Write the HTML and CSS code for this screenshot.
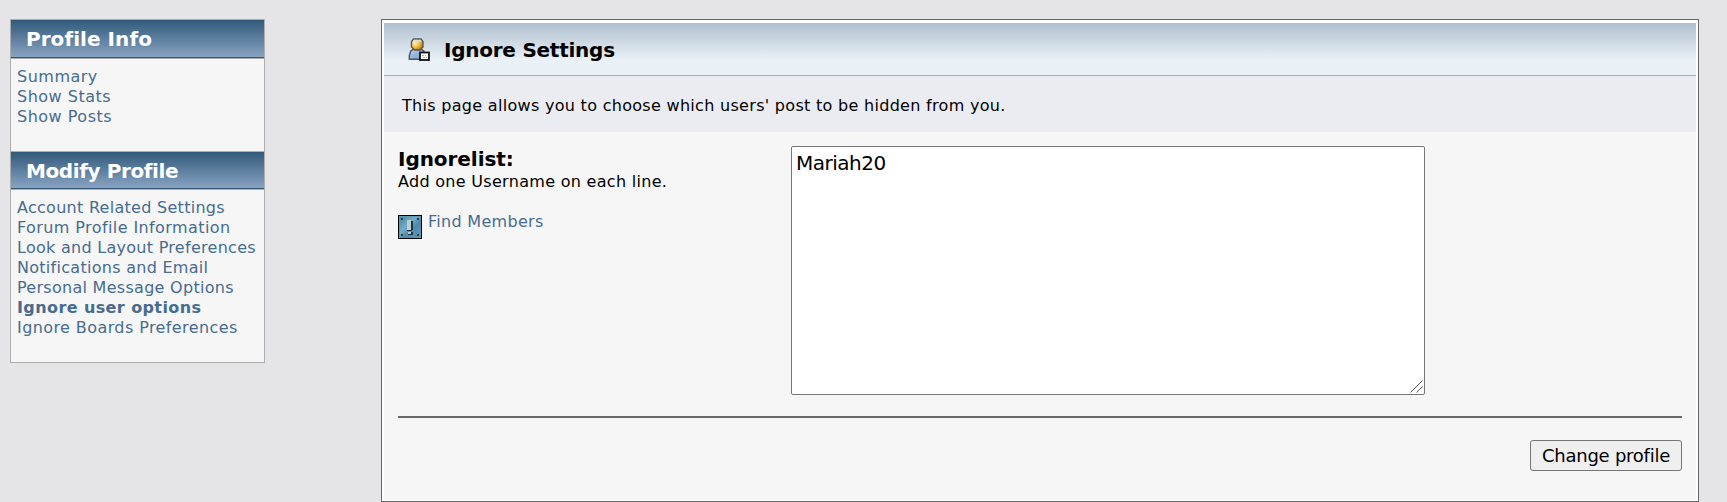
FILE: index.html
```html
<!DOCTYPE html>
<html>

<head>
	<meta charset="utf-8">
	<title>Ignore Settings</title>
	<link rel="stylesheet" href="styles.css">
</head>

<body>
	<div class="profile">
		<div class="sidebar">
			<h3 class="catbg">Profile Info</h3>
			<div class="links first">
				<a href="#">Summary</a><br>
				<a href="#">Show Stats</a><br>
				<a href="#">Show Posts</a>
			</div>
			<h3 class="catbg next">Modify Profile</h3>
			<div class="links last">
				<a href="#">Account Related Settings</a><br>
				<a href="#" class="wide">Forum Profile Information</a><br>
				<a href="#">Look and Layout Preferences</a><br>
				<a href="#">Notifications and Email</a><br>
				<a href="#">Personal Message Options</a><br>
				<a href="#" class="current">Ignore user options</a><br>
				<a href="#" class="wide">Ignore Boards Preferences</a>
			</div>
		</div>

		<form class="content" onsubmit="return false">
			<div class="titlebg">
				<svg width="22" height="23" viewBox="0 0 22 23">
					<defs>
						<linearGradient id="coat" x2="1" y2="1"><stop offset="0" stop-color="#b9d3ea"/><stop offset="1" stop-color="#6c9aca"/></linearGradient>
						<radialGradient id="face" cx=".3" cy=".35" r=".8"><stop offset="0" stop-color="#fff4c4"/><stop offset=".5" stop-color="#f0bd48"/><stop offset="1" stop-color="#a96c08"/></radialGradient>
					</defs>
					<path d="M1.300 21.200V17.500l1.500-4.500 3-2h7l3 2 1 3v5.200z" fill="url(#coat)" stroke="#4d5560" stroke-width="1.400"/>
					<path d="M5.500 1h7.500l2 2.500v5.500l-3 3h-5.500l-3-3v-5.500z" fill="url(#face)" stroke="#59564d" stroke-width="1.300"/>
					<path d="M5.800 1.700h7l1 2h-9z" fill="#dddcd6"/>
					<rect x="12" y="14.500" width="9" height="7.500" fill="#fff" stroke="#111" stroke-width="1.800"/>
					<path d="M14 17h2v1h-2zM17 17h1v1h-1zM15 19h2v1h-2zM18 19h1v1h-1z" fill="#a9b0b4"/>
				</svg>
				<span>Ignore Settings</span>
			</div>
			<div class="description">This page allows you to choose which users' post to be hidden from you.</div>
			<div class="settings">
				<div class="row">
					<div class="label">
						<b>Ignorelist:</b>
						<div class="small">Add one Username on each line.</div>
						<a href="#" class="find">
							<svg width="24" height="24" viewBox="0 0 24 24">
								<defs><linearGradient id="block" x2="1" y2="1"><stop offset="0" stop-color="#437f9f"/><stop offset=".4" stop-color="#76adc9"/><stop offset=".6" stop-color="#4f8aab"/><stop offset="1" stop-color="#5d9abb"/></linearGradient></defs>
								<path d="M0 0h24v24H0z" fill="#000"/>
								<path d="M1 1h22v22H1z" fill="url(#block)"/>
								<path d="M1 1h22v1H1zM1 1h1v22H1z" fill="#6498b2"/>
								<path d="M3 3h2v2H3zM19 3h2v2h-2zM3 19h2v2H3zM19 19h2v2h-2z" fill="#254452"/>
								<path d="M13 6h2v9h-1v1h-5v-1h4zM13 17h2v3h-5v-1h3z" fill="#22323e"/>
								<path d="M9 5h4v10H9zM10 17h3v2h-3z" fill="#b9cdd9"/>
							</svg>
							<span>Find Members</span>
						</a>
					</div>
					<div class="box">
						<textarea name="ignorelist" spellcheck="false">Mariah20</textarea>
						<svg class="grip" width="13" height="13" viewBox="0 0 13 13"><path d="M.5 12.500l12-12M6.500 12.500l6-6" stroke="#5a5a5a" fill="none"/></svg>
					</div>
				</div>
				<hr>
				<div class="submit"><button type="submit">Change profile</button></div>
			</div>
		</form>
	</div>
</body>

</html>
```
FILE: styles.css
```css
* {
	box-sizing:border-box;
}

body {
	margin:0;
	padding:19px 28px 0 10px;
	height:502px;
	overflow:hidden;
	background-color:#e5e5e8;
	color:#000;
	font-family:Verdana, "DejaVu Sans", sans-serif;
	font-size:16px;
	letter-spacing:0.3px;
}

a {
	color:#476c8e;
	text-decoration:none;
}

.profile {
	display:flex;
	align-items:flex-start;
	justify-content:space-between;
}

.sidebar {
	width:255px;
	height:344px;
	border:1px solid #adadad;
	background-color:#f6f6f6;
}

.catbg {
	height:38px;
	margin:0;
	padding-left:15px;
	border-bottom:1px solid #375576;
	background:linear-gradient(#32597b, #88a3c2);
	color:#fff;
	font-size:20px;
	line-height:38px;
	letter-spacing:0.05px;
}

.next {
	border-top:1px solid #adadad;
	letter-spacing:-0.4px;
}

.links {
	padding:8px 0 0 6px;
	border-top:1px solid #adadad;
	line-height:20px;
	white-space:nowrap;
}

.first {
	height:93px;
	letter-spacing:0.5px;
}

.last {
	height:173px;
	letter-spacing:0.28px;
}

.wide {
	letter-spacing:0.41px;
}

.current {
	font-weight:bold;
	letter-spacing:0.4px;
}

.content {
	width:1318px;
	height:483px;
	padding:3px 2px 2px;
	border:1px solid #696969;
	background-color:#fff;
}

.titlebg {
	display:flex;
	align-items:center;
	height:53px;
	padding-left:24px;
	gap:14px;
	border-bottom:1px solid #9bafc6;
	background:linear-gradient(#afc0cf, #e9f0f6 70%);
	font-size:20px;
	font-weight:bold;
	letter-spacing:-0.25px;
}

.titlebg span {
	padding-top:1px;
}

.description {
	height:56px;
	padding-left:18px;
	background-color:#ebecf2;
	line-height:59px;
}

.settings {
	height:368px;
	padding:14px 14px 0;
	background-color:#f6f6f6;
}

.row {
	display:flex;
}

.label {
	width:393px;
}

.label b {
	display:block;
	font-size:20px;
	line-height:26px;
	letter-spacing:-0.05px;
}

.small {
	line-height:20px;
}

.find {
	display:flex;
	align-items:flex-start;
	gap:6px;
	margin-top:23px;
}

.find span {
	margin-top:-3px;
	line-height:20px;
}

.box {
	position:relative;
	height:249px;
}

textarea {
	display:block;
	width:634px;
	height:249px;
	margin:0;
	padding:4px;
	border:1px solid #767676;
	border-radius:2px;
	background-color:#fff;
	font-family:inherit;
	font-size:20px;
	letter-spacing:-0.5px;
	resize:none;
}

.grip {
	position:absolute;
	right:2px;
	bottom:2px;
}

hr {
	height:2px;
	margin:21px 0 22px;
	border:0;
	background-color:#696969;
}

.submit {
	text-align:right;
}

button {
	width:152px;
	height:31px;
	padding:0;
	border:1px solid #767676;
	border-radius:3px;
	background-color:#efefef;
	color:#000;
	font-family:inherit;
	font-size:18px;
	letter-spacing:-0.25px;
}
```
